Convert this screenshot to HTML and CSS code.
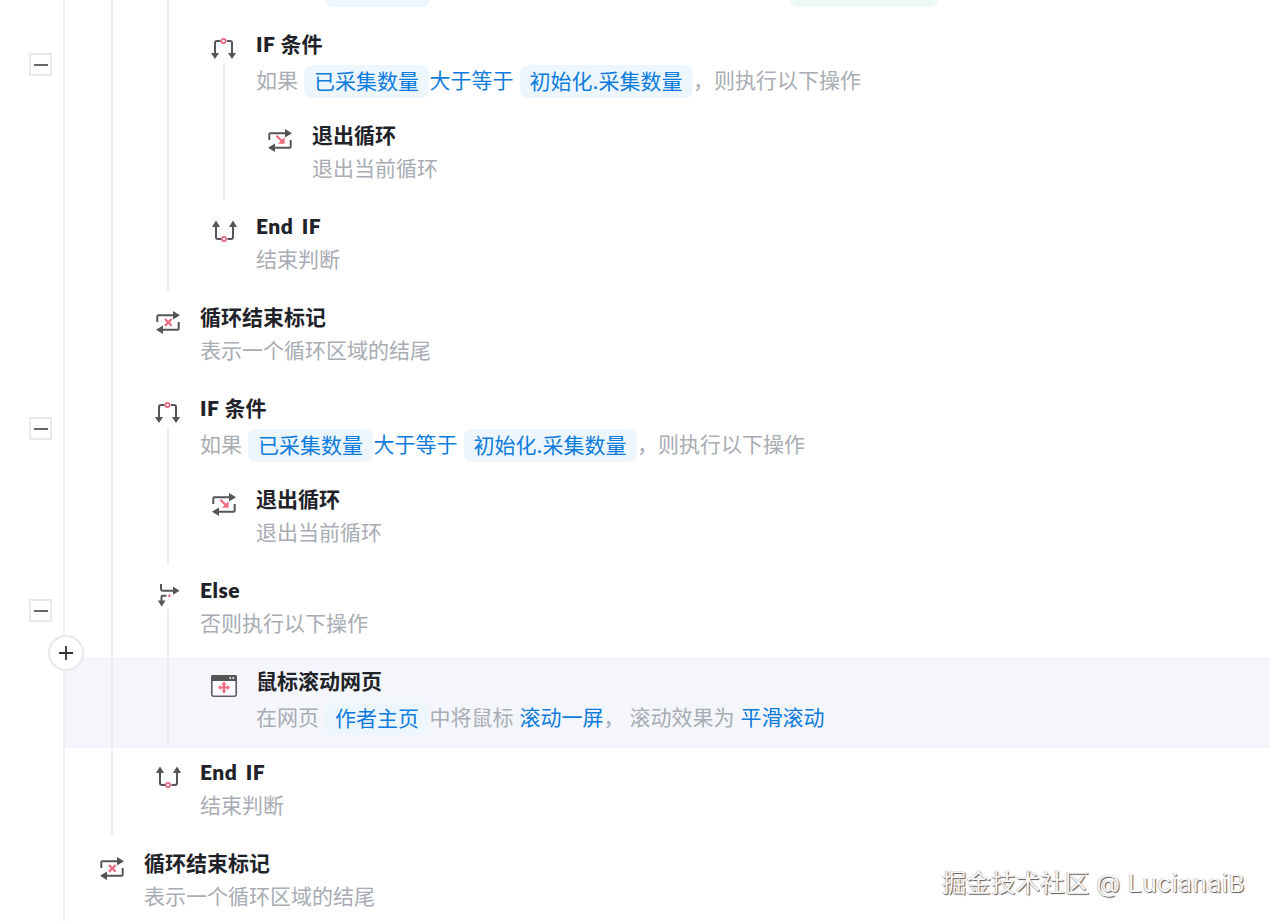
FILE: index.html
```html
<!DOCTYPE html>
<html lang="zh-CN">
<head>
<meta charset="utf-8">
<title>流程</title>
<link rel="stylesheet" href="styles.css">
</head>
<body>
<svg class="defs" width="0" height="0" aria-hidden="true">
  <defs>
    <symbol id="i-if" viewBox="0 0 32 32">
      <path class="st" d="M7 22V11a2 2 0 0 1 2-2h3.500M19 9h3a2 2 0 0 1 2 2v11"/>
      <path class="fl" d="M3 21h8L7 27zM20 21h8L24 27z"/>
      <circle class="pk" cx="15.500" cy="9" r="2.200"/>
    </symbol>
    <symbol id="i-endif" viewBox="0 0 32 32">
      <path class="st" d="M8 12v11a2 2 0 0 0 2 2h3M19.500 25H23a2 2 0 0 0 2-2V12"/>
      <path class="fl" d="M4 13h8L8 6.500zM21 13h8L25 6.500z"/>
      <circle class="pk" cx="16" cy="25" r="2.200"/>
    </symbol>
    <symbol id="i-exit" viewBox="0 0 32 32">
      <path class="st" d="M5.300 17v-5.500a1.200 1.200 0 0 1 1.200-1.200H22M26.700 17v6.500a1.200 1.200 0 0 1-1.200 1.200H10"/>
      <path class="fl" d="M21 6l7 4.300-7 4.300zM11 20.400l-7 4.300 7 4.300z"/>
      <path class="pl" d="M12.400 12.800l5.400 5.200"/>
      <path class="pf" d="M20.600 20.800v-6.600l-6.600 6.600z"/>
    </symbol>
    <symbol id="i-end" viewBox="0 0 32 32">
      <path class="st" d="M5.300 17v-5.500a1.200 1.200 0 0 1 1.200-1.200H22M26.700 17v6.500a1.200 1.200 0 0 1-1.200 1.200H10"/>
      <path class="fl" d="M21 6l7 4.300-7 4.300zM11 20.400l-7 4.300 7 4.300z"/>
      <path class="pl" d="M13 14l6.600 6.800M19.600 14L13 20.800"/>
    </symbol>
    <symbol id="i-else" viewBox="0 0 32 32">
      <path class="st" d="M9 6v5a1.700 1.700 0 0 0 1.700 1.700H22M14.500 17.700h-3.700a1.300 1.300 0 0 0-1.300 1.300v4"/>
      <path class="fl" d="M21 8.600l6.600 4.100-6.600 4.100zM5.800 22.500h7.800L9.700 28.500z"/>
      <circle class="dot" cx="17.300" cy="17.700" r="1.300"/>
    </symbol>
    <symbol id="i-web" viewBox="0 0 32 32">
      <rect class="bx" x="3.800" y="6.800" width="24.400" height="20.400" rx="1.600"/>
      <path class="fl" d="M3 7.500A1.500 1.500 0 0 1 4.500 6h23A1.500 1.500 0 0 1 29 7.500V12H3z"/>
      <circle class="wd" cx="22.300" cy="9" r="0.900"/>
      <circle class="wd" cx="25.300" cy="9" r="0.900"/>
      <path class="pl" d="M16 14.500v8M12 18.500h8"/>
      <path class="pf" d="M13.500 15.500L16 12.500l2.500 3zM13.500 21.500L16 24.500l2.500-3zM13 16L10 18.500l3 2.500zM19 16l3 2.500-3 2.500z"/>
    </symbol>
  </defs>
</svg>

<main class="tree">
  <div class="group group-open group-end-4">
    <div class="group group-open group-end-2">
      <div class="row">
        <div class="spacer"></div>
        <div class="body">
          <div class="title"></div>
          <div class="desc desc-pills"><span class="chip chip-blue"></span><span class="chip chip-green"></span></div>
        </div>
      </div>

      <div class="row">
        <button class="collapse" type="button" aria-label="折叠"><span class="minus"></span></button>
        <svg class="icon"><use href="#i-if"/></svg>
        <div class="body">
          <div class="title"><span class="latin">IF</span> 条件</div>
          <div class="desc desc-pills">如果<span class="pill">已采集数量</span><span class="plain">大于等于</span><span class="pill">初始化.采集数量</span>，则执行以下操作</div>
        </div>
      </div>
      <div class="group group-end-2">
        <div class="row">
          <svg class="icon"><use href="#i-exit"/></svg>
          <div class="body">
            <div class="title">退出循环</div>
            <div class="desc">退出当前循环</div>
          </div>
        </div>
      </div>
      <div class="row">
        <svg class="icon"><use href="#i-endif"/></svg>
        <div class="body">
          <div class="title"><span class="latin">End IF</span></div>
          <div class="desc">结束判断</div>
        </div>
      </div>
    </div>

    <div class="row">
      <svg class="icon"><use href="#i-end"/></svg>
      <div class="body">
        <div class="title">循环结束标记</div>
        <div class="desc">表示一个循环区域的结尾</div>
      </div>
    </div>

    <div class="row">
      <button class="collapse" type="button" aria-label="折叠"><span class="minus"></span></button>
      <svg class="icon"><use href="#i-if"/></svg>
      <div class="body">
        <div class="title"><span class="latin">IF</span> 条件</div>
        <div class="desc desc-pills">如果<span class="pill">已采集数量</span><span class="plain">大于等于</span><span class="pill">初始化.采集数量</span>，则执行以下操作</div>
      </div>
    </div>
    <div class="group group-end-1">
      <div class="row">
        <svg class="icon"><use href="#i-exit"/></svg>
        <div class="body">
          <div class="title">退出循环</div>
          <div class="desc">退出当前循环</div>
        </div>
      </div>
    </div>

    <div class="row">
      <button class="collapse" type="button" aria-label="折叠"><span class="minus"></span></button>
      <svg class="icon"><use href="#i-else"/></svg>
      <div class="body">
        <div class="title"><span class="latin">Else</span></div>
        <div class="desc">否则执行以下操作</div>
      </div>
    </div>
    <div class="group">
      <div class="row row-active">
        <button class="add" type="button" aria-label="添加">
          <svg class="add-icon" viewBox="0 0 16 16"><path d="M8 1v14M1 8h14"/></svg>
        </button>
        <svg class="icon"><use href="#i-web"/></svg>
        <div class="body">
          <div class="title">鼠标滚动网页</div>
          <div class="desc desc-pills">在网页<span class="pill">作者主页</span>中将鼠标<span class="link">滚动一屏</span>，<span class="after">滚动效果为</span><span class="link">平滑滚动</span></div>
        </div>
      </div>
    </div>

    <div class="row">
      <svg class="icon"><use href="#i-endif"/></svg>
      <div class="body">
        <div class="title"><span class="latin">End IF</span></div>
        <div class="desc">结束判断</div>
      </div>
    </div>
  </div>

  <div class="row row-tail">
    <svg class="icon"><use href="#i-end"/></svg>
    <div class="body">
      <div class="title">循环结束标记</div>
      <div class="desc">表示一个循环区域的结尾</div>
    </div>
  </div>
</main>

<div class="watermark">掘金技术社区 <span class="watermark-name">@ LucianaiB</span></div>
</body>
</html>
```

FILE: styles.css
```css
* { box-sizing: border-box; }

html, body {
  margin: 0;
  height: 922px;
  overflow: hidden;
  background: #fff;
}

body {
  position: relative;
  font-family: "Inter", "Noto Sans CJK SC", sans-serif;
  color: #a8acb4;
}

.defs { position: absolute; }

.tree {
  position: relative;
  display: flex;
  flex-direction: column;
  margin: -71px 0 0 63px;
  padding-left: 31px;
  border-left: 2px solid #f0f0f2;
}

.group {
  display: flex;
  flex-direction: column;
  margin: -48px 0 0 15px;
  padding: 48px 0 0 39px;
  border-left: 2px solid #ecedef;
}

.group-open {
  margin-top: 0;
  padding-top: 0;
}

.group-end-1 { margin-bottom: 1px; }
.group-end-1 > .row:last-child { margin-bottom: -1px; }
.group-end-2 { margin-bottom: 2px; }
.group-end-2 > .row:last-child { margin-bottom: -2px; }
.group-end-4 { margin-bottom: 4px; }
.group-end-4 > .row:last-child { margin-bottom: -4px; }

.row {
  display: flex;
  flex: none;
  gap: 16px;
  height: 91px;
  padding-top: 9px;
}

.row-active {
  margin-left: -144px;
  padding-left: 144px;
  background: rgba(236, 239, 248, 0.58);
}

.icon,
.spacer {
  flex: none;
  width: 32px;
  height: 32px;
  margin-top: 3px;
}

.title {
  height: 30px;
  font-family: "Lato", "Noto Sans CJK SC", sans-serif;
  font-size: 21px;
  line-height: 30px;
  font-weight: 700;
  color: #1f2329;
}

.latin {
  font-weight: 800;
  letter-spacing: 0.5px;
  word-spacing: 3px;
}

.desc {
  display: flex;
  align-items: center;
  height: 30px;
  margin-top: 4px;
  font-size: 21px;
  line-height: 30px;
  white-space: nowrap;
}

.desc-pills { height: 36px; }

.pill {
  height: 33px;
  margin: 0 0.5px 0 6px;
  padding: 0 10px;
  border-radius: 8px;
  background: #eef6fd;
  color: #0c7bdc;
  line-height: 33px;
}

.plain {
  color: #0c7bdc;
}

.chip {
  height: 33px;
  border-radius: 8px;
}

.chip-blue {
  width: 105px;
  margin-left: 69px;
  background: #eef6fd;
}

.chip-green {
  width: 148px;
  margin-left: 360px;
  background: #ebfaf2;
}

.link {
  margin-left: 6px;
  color: #0c7bdc;
}

.after { margin-left: 5px; }
.after + .link { margin-left: 6px; }

.collapse {
  position: absolute;
  left: -36px;
  width: 23px;
  height: 23px;
  margin-top: 24px;
  padding: 0;
  display: flex;
  align-items: center;
  justify-content: center;
  background: #fff;
  border: 2px solid #e9e9ea;
}

.minus {
  width: 14px;
  height: 2px;
  background: #666;
}

.add {
  position: absolute;
  left: -17px;
  width: 36px;
  height: 36px;
  margin-top: -31px;
  padding: 0;
  display: flex;
  align-items: center;
  justify-content: center;
  background: #fff;
  border: 2px solid #e9e9ea;
  border-radius: 50%;
}

.add-icon {
  width: 16px;
  height: 16px;
  fill: none;
  stroke: #333;
  stroke-width: 1.8;
}

.st { fill: none; stroke: #555; stroke-width: 2; }
.fl { fill: #555; }
.pk { fill: #fff; stroke: #e8657a; stroke-width: 1.7; }
.pl { fill: none; stroke: #ee6a7c; stroke-width: 2.2; }
.pf { fill: #ee6a7c; }
.dot { fill: #ee6a7c; }
.bx { fill: #fff; stroke: #5d5d66; stroke-width: 1.6; }
.wd { fill: #fff; }

.watermark {
  position: absolute;
  right: 25px;
  top: 868px;
  font-family: "Inter", "Noto Sans CJK SC", sans-serif;
  font-size: 24.600px;
  line-height: 30px;
  color: #f7f7f7;
  text-shadow: 1px 1px 1px #5a5a5a, -0.5px -0.5px 0 #aaa;
  white-space: nowrap;
}

.watermark-name {
  letter-spacing: 0.5px;
}
```
